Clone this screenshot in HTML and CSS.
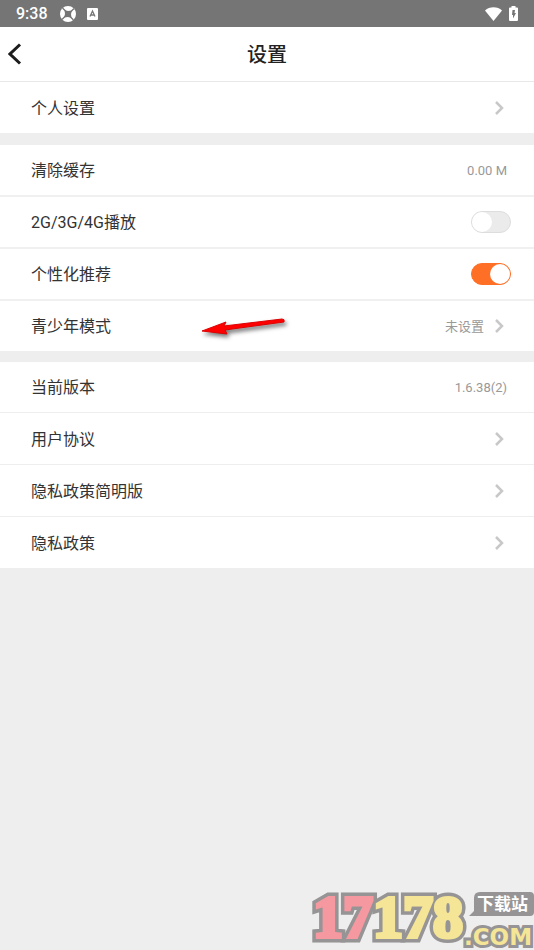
FILE: index.html
```html
<!DOCTYPE html>
<html lang="zh-CN">
<head>
<meta charset="utf-8">
<meta name="viewport" content="width=device-width, initial-scale=1">
<title>设置</title>
<link rel="stylesheet" href="styles.css">
</head>
<body>
<div class="status-bar">
  <span class="clock">9:38</span>
  <svg class="status-shutter" viewBox="0 0 16 16" aria-hidden="true">
    <circle cx="8" cy="8" r="8" fill="#fff"/>
    <path d="M4.500 4 8 5l4-.5L11 8l.5 4L8 11l-4 .5L5 8z" fill="#757575"/>
    <path d="M5.500 5 2.500 2M11 5.500l3-3M10.500 11l3 3M5 10.500l-3 3" stroke="#757575" stroke-width="1.300" fill="none"/>
  </svg>
  <svg class="status-input" viewBox="0 0 11 12" aria-hidden="true">
    <rect width="11" height="12" rx="1" fill="#fff"/>
    <path d="M3 8.500 5.500 3 8 8.500M4 7h3" stroke="#757575" stroke-width="1.300" fill="none"/>
  </svg>
  <svg class="status-wifi" viewBox="0 0 17 14" aria-hidden="true">
    <path d="M0 3.500Q3.500.3 8.500.3T17 3.500L8.500 14z" fill="#fff"/>
  </svg>
  <svg class="status-battery" viewBox="0 0 9 15" aria-hidden="true">
    <path d="M2.500 0h4v1.500H8q1 0 1 1V14q0 1-1 1H1q-1 0-1-1V2.500q0-1 1-1h1.500z" fill="#fff"/>
    <path d="M3.500 4h2.500L5.500 7H7l-3 5.500V9H3z" fill="#757575"/>
  </svg>
</div>

<header class="title-bar">
  <button class="back" type="button" aria-label="返回">
    <svg viewBox="0 0 14 22" aria-hidden="true"><path d="M12 1.500 2 11l10 9.500"/></svg>
  </button>
  <h1>设置</h1>
</header>

<main>
  <section class="group">
    <a class="row" href="#profile"><span class="label">个人设置</span><svg class="chevron" viewBox="0 0 9 14" aria-hidden="true"><path d="m1 1 6 6-6 6"/></svg></a>
  </section>

  <section class="group group-wide">
    <button class="row" type="button"><span class="label">清除缓存</span><span class="value">0.00 M</span></button>
    <label class="row"><span class="label">2G/3G/4G播放</span><input class="switch" type="checkbox"></label>
    <label class="row"><span class="label">个性化推荐</span><input class="switch" type="checkbox" checked></label>
    <a class="row" href="#youth"><span class="label">青少年模式</span><span class="value value-link">未设置</span><svg class="chevron" viewBox="0 0 9 14" aria-hidden="true"><path d="m1 1 6 6-6 6"/></svg>
      <svg class="pointer" viewBox="0 0 92 28" aria-hidden="true"><path d="M3 15 27 6l-2 4L83 3q3 0 2 3L26 14l2 4z"/></svg></a>
  </section>

  <section class="group group-info">
    <div class="row"><span class="label">当前版本</span><span class="value">1.6.38(2)</span></div>
    <a class="row" href="#terms"><span class="label">用户协议</span><svg class="chevron" viewBox="0 0 9 14" aria-hidden="true"><path d="m1 1 6 6-6 6"/></svg></a>
    <a class="row" href="#privacy-brief"><span class="label">隐私政策简明版</span><svg class="chevron" viewBox="0 0 9 14" aria-hidden="true"><path d="m1 1 6 6-6 6"/></svg></a>
    <a class="row" href="#privacy"><span class="label">隐私政策</span><svg class="chevron" viewBox="0 0 9 14" aria-hidden="true"><path d="m1 1 6 6-6 6"/></svg></a>
  </section>
</main>

<svg class="watermark" viewBox="0 0 224 62">
  <path class="bubble" d="M170 4h50q4 0 4 4v16q0 4-4 4h-61l5-5V10q0-6 6-6z"/>
  <g class="outline"><use href="#digits"/><use href="#domain"/></g>
  <g class="face">
    <text id="digits" class="digits" x="3" y="49"><tspan class="red">17</tspan>178</text>
    <text id="domain" class="domain" x="154" y="57">.COM</text>
  </g>
  <text class="site" x="167" y="22">下载站</text>
</svg>
</body>
</html>
```
FILE: styles.css
```css
* { box-sizing: border-box; }

body {
  position: relative;
  min-height: 100vh;
  margin: 0;
  background: #eee;
  color: #333;
  font-family: Roboto, "Noto Sans CJK SC", sans-serif;
  font-size: 16px;
}

.status-bar {
  display: flex;
  align-items: center;
  height: 27px;
  padding: 0 16px;
  background: #757575;
  color: #fff;
}

.clock { font-size: 16px; font-weight: 500; }
.status-shutter { width: 16px; height: 16px; margin-left: 12px; }
.status-input { width: 11px; height: 12px; margin-left: 11px; }
.status-wifi { width: 17px; height: 14px; margin-left: auto; }
.status-battery { width: 9px; height: 15px; margin-left: 7px; }

.title-bar {
  display: grid;
  grid-template-columns: 40px 1fr 40px;
  align-items: center;
  height: 55px;
  background: #fff;
  border-bottom: 1px solid #e8e8e8;
}

.title-bar h1 {
  margin: 0;
  padding-bottom: 2px;
  color: #222;
  font-size: 20px;
  font-weight: 500;
  text-align: center;
}

.back {
  display: flex;
  padding: 0 8px;
  border: 0;
  background: none;
}

.back svg { width: 14px; height: 22px; }
.back path { fill: none; stroke: #1c1c1c; stroke-width: 3; }

.group { margin-bottom: 12px; background: #fff; }
.group-wide { margin-bottom: 10px; }
.group-info { margin-bottom: 0; border-top: 1px solid #eee; }

.row {
  position: relative;
  display: flex;
  align-items: center;
  width: 100%;
  height: 51px;
  padding: 0 30px 0 31px;
  border: 0;
  background: none;
  color: inherit;
  font: inherit;
  text-align: left;
  text-decoration: none;
}

.row + .row { height: 52px; border-top: 1px solid #eee; }
.group-wide .row,
.group-info .row:first-child { height: 50px; }
.group-wide .row + .row { height: 52px; border-top: 2px solid #f0f0f0; }

.label { flex: 1; padding-bottom: 2px; }

.value { margin-right: -3px; color: #999; font-size: 13px; }
.value-link { margin-right: 11px; padding-bottom: 2px; }

.chevron { width: 9px; height: 14px; }
.chevron path { fill: none; stroke: #c8c8c8; stroke-width: 2.5; }

.switch {
  appearance: none;
  display: flex;
  width: 40px;
  height: 22px;
  margin: 0 -7px 0 0;
  padding: 0;
  border: 1px solid #ddd;
  border-radius: 11px;
  background: #ebebeb;
}

.switch::before {
  content: "";
  width: 20px;
  height: 20px;
  border-radius: 50%;
  background: #fff;
}

.switch:checked {
  justify-content: flex-end;
  border-color: #ff6f26;
  background: #ff6f26;
}

.pointer {
  position: absolute;
  top: 15px;
  left: 199px;
  width: 92px;
  height: 28px;
  filter: drop-shadow(2px 3px 2px #0008);
}

.pointer path { fill: #f00; stroke: #d00; stroke-width: 1; }

.watermark {
  position: absolute;
  right: 0;
  bottom: 0;
  width: 224px;
  height: 62px;
}

.bubble { fill: #969495; }

.outline {
  --main: #969495;
  --accent: #969495;
  --digit-stroke: 11px;
  --domain-stroke: 6px;
}

.face {
  --main: #f5e596;
  --accent: #f598a0;
  --digit-stroke: 4px;
  --domain-stroke: 0;
}

.digits {
  fill: var(--main);
  stroke: var(--main);
  stroke-width: var(--digit-stroke);
  font: bold 60px "Liberation Serif", serif;
}

.red { fill: var(--accent); stroke: var(--accent); }

.domain {
  fill: var(--main);
  stroke: var(--main);
  stroke-width: var(--domain-stroke);
  font: bold 23px "DejaVu Sans", sans-serif;
}

.site { fill: #fff; font: bold 17px "Noto Sans CJK SC", sans-serif; }
```
